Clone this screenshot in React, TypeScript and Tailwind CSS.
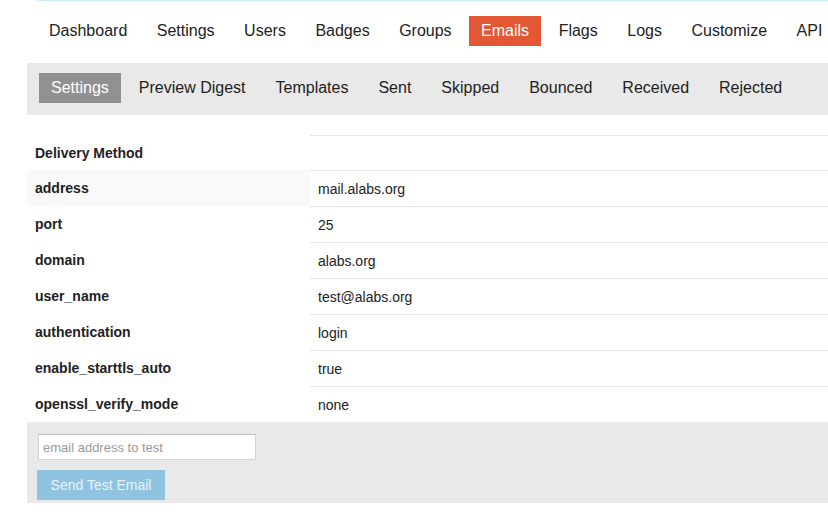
const mainNav = ["Dashboard", "Settings", "Users", "Badges", "Groups", "Emails", "Flags", "Logs", "Customize", "API"];
const subNav = ["Settings", "Preview Digest", "Templates", "Sent", "Skipped", "Bounced", "Received", "Rejected"];

const rows = [
  { key: "address", value: "mail.alabs.org", striped: true },
  { key: "port", value: "25" },
  { key: "domain", value: "alabs.org" },
  { key: "user_name", value: "test@alabs.org" },
  { key: "authentication", value: "login" },
  { key: "enable_starttls_auto", value: "true" },
  { key: "openssl_verify_mode", value: "none" },
];

export default function App() {
  return (
    <div className="min-h-[528px] overflow-hidden bg-white font-['Liberation_Sans',Arial,sans-serif] text-[#222]">
      <div className="ml-[37px] h-px bg-[#ccf0ff]" />

      {/* main nav */}
      <ul className="flex gap-[5.5px] whitespace-nowrap pb-[17px] pl-[37px] pt-[15px]">
        {mainNav.map((item) => (
          <li
            key={item}
            className={
              item === "Emails"
                ? "bg-[#e45735] px-3 py-[5px] text-base leading-5 text-white"
                : "px-3 py-[5px] text-base leading-5"
            }
          >
            {item}
          </li>
        ))}
      </ul>

      {/* sub nav */}
      <ul className="ml-[27px] flex gap-[6px] whitespace-nowrap bg-[#e9e9e9] pb-3 pl-3 pt-[10px]">
        {subNav.map((item, i) => (
          <li
            key={item}
            className={
              i === 0
                ? "bg-[#919191] px-3 py-[5px] text-base leading-5 text-white"
                : "px-3 py-[5px] text-base leading-5"
            }
          >
            {item}
          </li>
        ))}
      </ul>

      {/* settings table */}
      <div className="ml-[27px] mt-5 grid grid-cols-[283px_1fr] text-sm">
        <div className="flex h-[35px] items-center pl-2 font-bold">Delivery Method</div>
        <div className="h-[35px] border-t border-[#e5e5e5]" />
        {rows.map((row) => (
          <div key={row.key} className="contents">
            <div
              className={
                row.striped
                  ? "flex h-9 items-center bg-[#f9f9f9] pl-2 font-bold"
                  : "flex h-9 items-center pl-2 font-bold"
              }
            >
              {row.key}
            </div>
            <div className="flex h-9 items-center border-t border-[#e5e5e5] pl-2">{row.value}</div>
          </div>
        ))}
      </div>

      {/* test email */}
      <div className="ml-[27px] flex flex-col items-start bg-[#e9e9e9] pb-[3px] pl-[10px] pt-3">
        <input
          className="ml-px h-[26px] w-[218px] border border-[#d4d4d4] border-t-[#bdbdbd] bg-white px-[4px] text-[13px] outline-none placeholder:text-[#9a9a9a]"
          placeholder="email address to test"
        />
        <button className="mt-[10px] h-[30px] w-[128px] bg-[#8fc3df] text-sm text-[#e8f3f9]">Send Test Email</button>
      </div>
    </div>
  );
}
